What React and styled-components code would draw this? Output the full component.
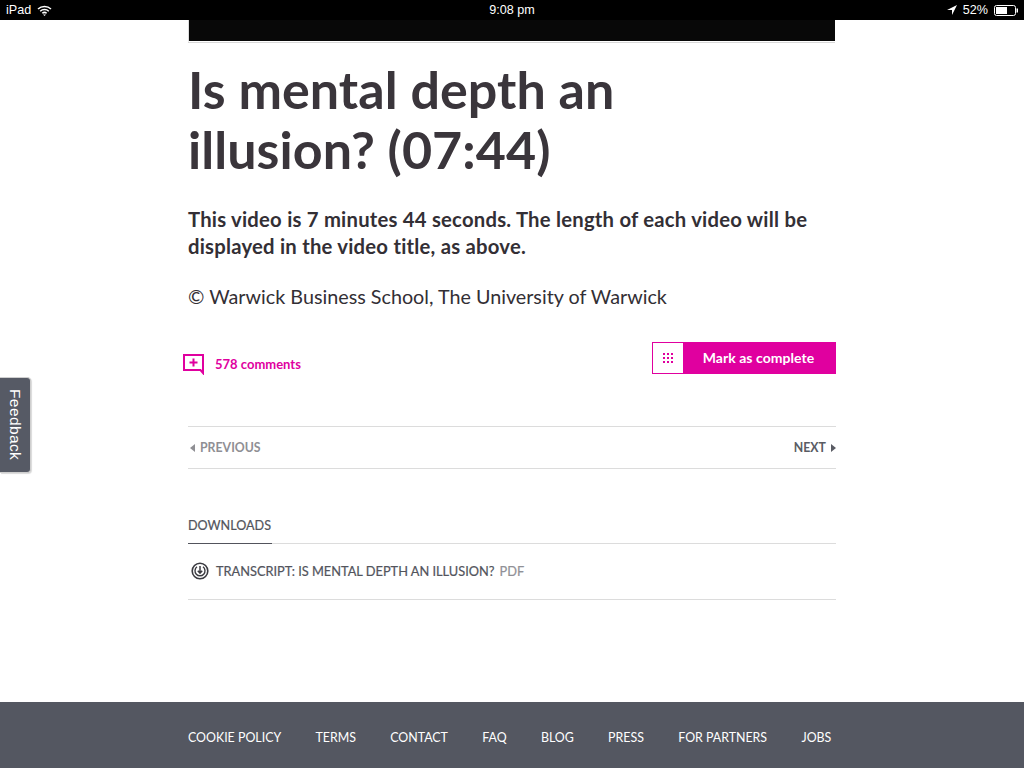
import React from 'react';
import styled, { createGlobalStyle } from 'styled-components';

const Global = createGlobalStyle`
  html, body { margin: 0; padding: 0; background: #fff; }
  body { font-family: Lato, "Open Sans", sans-serif; }
`;
const Page = styled.div`
  width: 1024px; height: 768px; position: relative; overflow: hidden;
  display: flex; flex-direction: column; background: #fff;
`;
const StatusBar = styled.div`
  height: 20px; background: #000; color: #fff; flex: none;
  display: grid; grid-template-columns: 1fr auto 1fr; align-items: center;
  padding: 0 6px; font: 12.6px/20px "Liberation Sans", Arial, sans-serif;
`;
const StatusLeft = styled.div`display: flex; align-items: center; gap: 6px;`;
const StatusRight = styled.div`display: flex; align-items: center; justify-content: flex-end; gap: 6px;`;
const Main = styled.main`
  flex: 1; width: 648px; margin-left: 188px; display: flex; flex-direction: column;
`;
const VideoBar = styled.div`
  height: 21px; width: 646px; background: #080808; border-left: 1px solid #ddd; border-bottom: 1px solid #fff;
  box-shadow: 0 1px 0 #d8d8d8; flex: none;
`;
const Title = styled.h1`
  margin: 17px 0 0; font-size: 52px; line-height: 60px; font-weight: 700; color: #3a353b; width: 500px;
  letter-spacing: 0.06px;
`;
const Lead = styled.p`
  margin: 27px 0 0; font-size: 20.3px; line-height: 27px; font-weight: 700; color: #332f35;
  letter-spacing: 0.22px;
`;
const Copy = styled.p`
  margin: 23px 0 0; font-size: 19.75px; line-height: 27px; font-weight: 400; color: #332f35;
`;
const Actions = styled.div`
  margin-top: 32px; display: flex; justify-content: space-between; align-items: flex-start; height: 32px;
`;
const Comments = styled.a`
  display: flex; align-items: center; gap: 10px; margin: 11px 0 0 -5px; color: #e0009f;
  font-size: 13px; font-weight: 700;
`;
const CompleteButton = styled.button`
  display: flex; align-items: stretch; height: 32px; width: 184px; padding: 0; margin: 0;
  border: 1px solid #e0009f; background: #e0009f; color: #fff; font: 700 14px Lato, sans-serif;
`;
const ButtonIcon = styled.span`
  width: 30px; background: #fff; display: flex; align-items: center; justify-content: center; flex: none;
`;
const ButtonLabel = styled.span`
  flex: 1; display: flex; align-items: center; justify-content: center; padding: 0 1px 2px 0;
  letter-spacing: 0.05px;
`;
const Pager = styled.nav`
  margin-top: 52px; height: 41px; border-top: 1px solid #dcdcdc; border-bottom: 1px solid #dcdcdc;
  display: flex; justify-content: space-between; align-items: center;
  font-size: 12.3px; font-weight: 700;
`;
const PagerLink = styled.a`
  display: flex; align-items: center; gap: 5px; color: ${p => (p.$muted ? '#8f8f94' : '#5a5c64')};
  padding-left: ${p => (p.$muted ? '2px' : '0')};
`;
const Tab = styled.div`
  margin-top: 48px; width: 84px; height: 26px; font-size: 12.6px; line-height: 17px; color: #52545c;
  border-bottom: 1px solid #52545c; position: relative; margin-bottom: -1px;
  -webkit-text-stroke: 0.2px #52545c;
`;
const Downloads = styled.div`
  height: 53px; border-top: 1px solid #dcdcdc; border-bottom: 1px solid #dcdcdc;
  display: flex; align-items: center; gap: 7px; padding: 0 0 2px 3px;
  font-size: 12.8px; color: #52545c; -webkit-text-stroke: 0.2px currentColor;
`;
const Pdf = styled.span`color: #909096; margin-left: 5px;`;
const Footer = styled.footer`
  height: 66px; background: #545761; flex: none; padding: 4px 0 0 188px; box-sizing: border-box;
  display: flex; align-items: center; gap: 34.3px; color: #fff; font-size: 12.4px; white-space: nowrap;
`;
const Feedback = styled.div`
  position: absolute; left: 0; top: 377px; width: 31px; height: 96px; box-sizing: border-box;
  background: #565a65; border: 1px solid #cfcfcf; border-left: 0; border-radius: 0 4px 4px 0;
  box-shadow: 1px 1px 1px rgba(0,0,0,.15);
  color: #fff; font: 15.5px/29px "Liberation Sans", Arial, sans-serif; letter-spacing: 0.4px;
  writing-mode: vertical-rl; text-align: center;
`;

const Triangle = ({ dir, color }) => (
  <svg width="5" height="8" viewBox="0 0 5 8" fill={color}>
    <path d={dir === 'left' ? 'M5 0v8L0 4z' : 'M0 0v8l5-4z'} />
  </svg>
);

export default function App() {
  return (
    <Page>
      <Global />
      <StatusBar>
        <StatusLeft>
          iPad
          <svg width="15" height="11" viewBox="0 0 15 11" fill="none" stroke="#fff" strokeWidth="1.5">
            <path d="M1 4a9.5 9.5 0 0 1 13 0M3.2 6.2a6.4 6.4 0 0 1 8.6 0M5.3 8.3a3.4 3.4 0 0 1 4.4 0" />
            <path d="M7.5 11L6 9.5h3z" fill="#fff" stroke="none" />
          </svg>
        </StatusLeft>
        <span>9:08 pm</span>
        <StatusRight>
          <svg width="10" height="10" viewBox="0 0 10 10" fill="#fff"><path d="M10 0L0 5h5v5z" /></svg>
          52%
          <svg width="24" height="11" viewBox="0 0 24 11" fill="none">
            <rect x="0.5" y="0.5" width="21" height="10" rx="2" stroke="#fff" />
            <rect x="2" y="2" width="11" height="7" fill="#fff" />
            <rect x="22.5" y="3.5" width="1.5" height="4" fill="#fff" />
          </svg>
        </StatusRight>
      </StatusBar>
      <Main>
        <VideoBar />
        <Title>Is mental depth an illusion? (07:44)</Title>
        <Lead>This video is 7 minutes 44 seconds. The length of each video will be displayed in the video title, as above.</Lead>
        <Copy>© Warwick Business School, The University of Warwick</Copy>
        <Actions>
          <Comments>
            <svg width="22" height="22" viewBox="0 0 22 22" fill="none" stroke="#e0009f" strokeWidth="2">
              <path d="M20 17V2H1v15h16.5l2.5 3z" />
              <path d="M6.5 9.5h8M10.5 5.5v8" />
            </svg>
            578 comments
          </Comments>
          <CompleteButton>
            <ButtonIcon>
              <svg width="10" height="10" viewBox="0 0 10 10" fill="#e0009f">
                {[0, 4, 8].flatMap(x => [0, 4, 8].map(y => <rect key={`${x}-${y}`} x={x} y={y} width="2" height="2" />))}
              </svg>
            </ButtonIcon>
            <ButtonLabel>Mark as complete</ButtonLabel>
          </CompleteButton>
        </Actions>
        <Pager>
          <PagerLink $muted><Triangle dir="left" color="#8f8f94" />PREVIOUS</PagerLink>
          <PagerLink>NEXT<Triangle dir="right" color="#5a5c64" /></PagerLink>
        </Pager>
        <Tab>DOWNLOADS</Tab>
        <Downloads>
          <svg width="18" height="18" viewBox="0 0 18 18" fill="none" stroke="#3a3a40">
            <circle cx="9" cy="9" r="7.8" strokeWidth="1.6" />
            <path d="M6 4.8a5 5 0 1 0 6 0" strokeWidth="1.4" />
            <path d="M9 4v7M6.8 8.8L9 11.2l2.2-2.4" strokeWidth="1.5" />
          </svg>
          <span>TRANSCRIPT: IS MENTAL DEPTH AN ILLUSION?<Pdf>PDF</Pdf></span>
        </Downloads>
      </Main>
      <Footer>
        <span>COOKIE POLICY</span><span>TERMS</span><span>CONTACT</span><span>FAQ</span>
        <span>BLOG</span><span>PRESS</span><span>FOR PARTNERS</span><span>JOBS</span>
      </Footer>
      <Feedback>Feedback</Feedback>
    </Page>
  );
}
